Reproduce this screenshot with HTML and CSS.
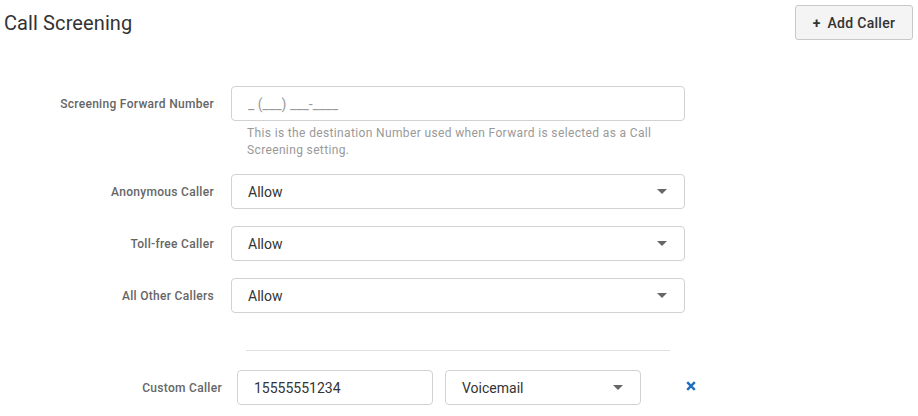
FILE: index.html
```
<!DOCTYPE html>
<html>
<head>
<meta charset="utf-8">
<link rel="stylesheet" href="styles.css">
</head>
<body>
<div class="page">
  <div class="header">
    <h1 class="title">Call Screening</h1>
    <button class="btn-add"><span class="plus">+</span> Add Caller</button>
  </div>

  <div class="form">
    <div class="row row-first">
      <label class="label">Screening Forward Number</label>
      <div class="field">
        <div class="control"><span class="placeholder">_ (___) ___-____</span></div>
      </div>
    </div>
    <div class="help-row">
      <div class="help">This is the destination Number used when Forward is selected as a Call Screening setting.</div>
    </div>

    <div class="row row-select">
      <label class="label">Anonymous Caller</label>
      <div class="field">
        <div class="control select"><span class="value">Allow</span><span class="caret"></span></div>
      </div>
    </div>
    <div class="row row-select">
      <label class="label">Toll-free Caller</label>
      <div class="field">
        <div class="control select"><span class="value">Allow</span><span class="caret"></span></div>
      </div>
    </div>
    <div class="row row-select">
      <label class="label">All Other Callers</label>
      <div class="field">
        <div class="control select"><span class="value">Allow</span><span class="caret"></span></div>
      </div>
    </div>
  </div>

  <div class="divider"></div>

  <div class="custom-row">
    <label class="label custom-label">Custom Caller</label>
    <div class="control small"><span class="value">15555551234</span></div>
    <div class="control small select"><span class="value">Voicemail</span><span class="caret"></span></div>
    <button class="remove" aria-label="Remove">
      <svg width="10" height="10" viewBox="0 0 10 10"><path d="M1.2 1.2 L8.8 8.8 M8.8 1.2 L1.2 8.8" stroke="#1f6fbf" stroke-width="2.4" stroke-linecap="butt"/></svg>
    </button>
  </div>
</div>
</body>
</html>
```
FILE: styles.css
```
* { box-sizing: border-box; }
html, body { margin: 0; padding: 0; background: #fff; }
body {
  font-family: Roboto, "Liberation Sans", Arial, sans-serif;
  color: #333;
}
.page { padding: 0 5px 0 4px; }

.header {
  display: flex;
  justify-content: space-between;
  align-items: flex-start;
  height: 86px;
}
.title {
  margin: 11px 0 0 0;
  font-size: 20px;
  font-weight: 400;
  line-height: 24px;
  letter-spacing: 0.1px;
  color: #333;
}
.btn-add {
  margin-top: 5px;
  height: 35px;
  width: 118px;
  border: 1px solid #c8c8c8;
  border-radius: 3px;
  background: #f4f4f4;
  font-family: Roboto, "Liberation Sans", Arial, sans-serif;
  font-size: 14px;
  font-weight: 500;
  letter-spacing: 0.3px;
  color: #333;
  padding: 0;
}
.btn-add .plus { font-weight: 700; margin-right: 3px; }

.row {
  display: flex;
  align-items: center;
}
.row-select { margin-top: 17px; }
.label {
  width: 210px;
  text-align: right;
  font-size: 12px;
  font-weight: 500;
  letter-spacing: 0.3px;
  color: #666;
  margin-right: 17px;
}
.field { width: 454px; }
.control {
  height: 35px;
  border: 1px solid #d2d2d2;
  border-radius: 4px;
  display: flex;
  align-items: center;
  padding: 0 16px;
  font-size: 14px;
  color: #333;
  background: #fff;
}
.placeholder { color: #9a9a9a; }
.select { justify-content: space-between; padding-right: 17px; }
.caret {
  width: 0; height: 0;
  border-left: 5px solid transparent;
  border-right: 5px solid transparent;
  border-top: 5px solid #666;
}

.help-row { padding-left: 243px; margin-top: 4px; margin-bottom: -2px; }
.help {
  width: 422px;
  font-size: 12px;
  line-height: 17px;
  letter-spacing: 0.36px;
  color: #999;
}

.divider {
  margin: 37px 0 0 242px;
  width: 424px;
  height: 1px;
  background: #e0e0e0;
}

.custom-row {
  display: flex;
  align-items: center;
  margin-top: 19px;
}
.custom-label { width: 218px; margin-right: 15px; }
.control.small { width: 196px; padding-left: 16px; padding-right: 17px; }
.control.small + .control.small { margin-left: 12px; }
.remove {
  margin-left: 45px;
  border: 0;
  background: transparent;
  padding: 0;
  width: 10px;
  height: 10px;
  display: flex;
  margin-top: -4px;
}
```
